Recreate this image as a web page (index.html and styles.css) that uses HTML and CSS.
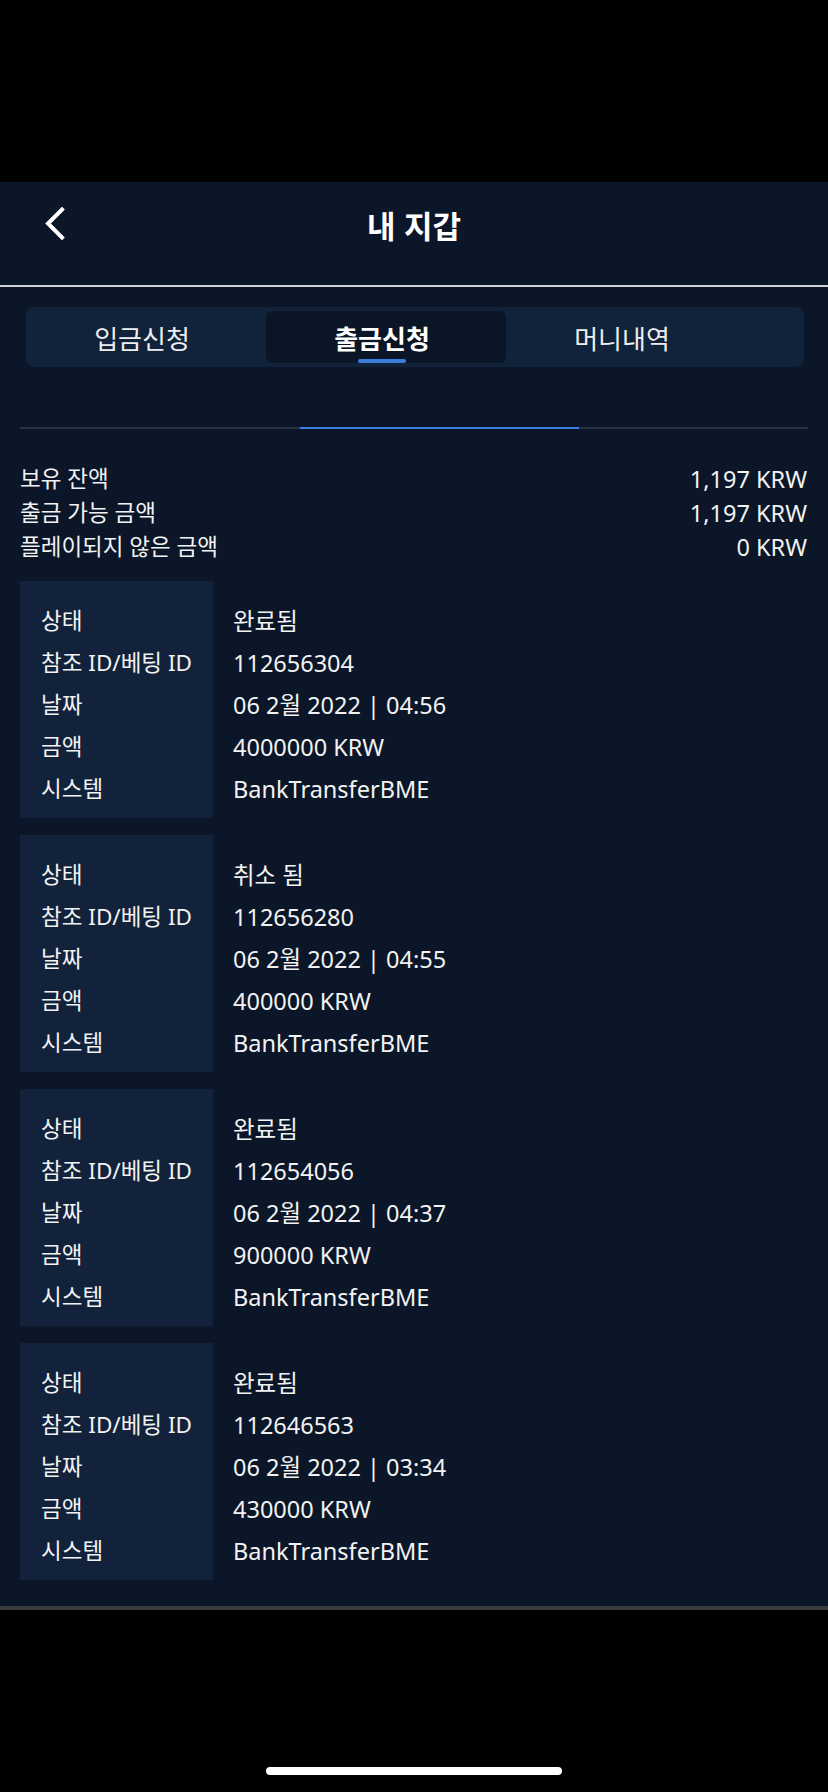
FILE: index.html
```html
<!DOCTYPE html>
<html lang="ko">
<head>
    <meta charset="UTF-8">
    <meta name="viewport" content="width=device-width, initial-scale=1.0">
    <title>내 지갑</title>
    <link rel="stylesheet" href="styles.css">
</head>
<body>
    <div class="status-bar"></div>

    <div class="app">
        <header class="topbar">
            <button class="back" aria-label="뒤로">
                <svg width="20" height="33" viewBox="0 0 20 33">
                    <polyline points="17,2.5 3,16.5 17,30.5" fill="none" stroke="#ffffff" stroke-width="4" stroke-linecap="square" stroke-linejoin="miter"/>
                </svg>
            </button>
            <h1>내 지갑</h1>
            <span></span>
        </header>

        <main class="content">
            <nav class="tabs">
                <div class="tab">입금신청</div>
                <div class="tab active">출금신청</div>
                <div class="tab">머니내역</div>
            </nav>

            <div class="tab-line"><div class="tab-line-active"></div></div>

            <!-- balance summary -->
            <div class="balance">
                <div class="balance-row"><span>보유 잔액</span><span class="amount">1,197 KRW</span></div>
                <div class="balance-row"><span>출금 가능 금액</span><span class="amount">1,197 KRW</span></div>
                <div class="balance-row"><span>플레이되지 않은 금액</span><span class="amount">0 KRW</span></div>
            </div>

            <!-- withdrawal history -->
            <div class="records">
                <div class="record">
                    <div class="labels">
                        <div>상태</div><div>참조 ID/베팅 ID</div><div>날짜</div><div>금액</div><div>시스템</div>
                    </div>
                    <div class="values">
                        <div>완료됨</div><div>112656304</div><div>06 2월 2022 | 04:56</div><div>4000000 KRW</div><div>BankTransferBME</div>
                    </div>
                </div>
                <div class="record">
                    <div class="labels">
                        <div>상태</div><div>참조 ID/베팅 ID</div><div>날짜</div><div>금액</div><div>시스템</div>
                    </div>
                    <div class="values">
                        <div>취소 됨</div><div>112656280</div><div>06 2월 2022 | 04:55</div><div>400000 KRW</div><div>BankTransferBME</div>
                    </div>
                </div>
                <div class="record">
                    <div class="labels">
                        <div>상태</div><div>참조 ID/베팅 ID</div><div>날짜</div><div>금액</div><div>시스템</div>
                    </div>
                    <div class="values">
                        <div>완료됨</div><div>112654056</div><div>06 2월 2022 | 04:37</div><div>900000 KRW</div><div>BankTransferBME</div>
                    </div>
                </div>
                <div class="record">
                    <div class="labels">
                        <div>상태</div><div>참조 ID/베팅 ID</div><div>날짜</div><div>금액</div><div>시스템</div>
                    </div>
                    <div class="values">
                        <div>완료됨</div><div>112646563</div><div>06 2월 2022 | 03:34</div><div>430000 KRW</div><div>BankTransferBME</div>
                    </div>
                </div>
            </div>
        </main>
    </div>

    <div class="home-area"><span class="home-indicator"></span></div>
</body>
</html>
```

FILE: styles.css
```css
* {
    margin: 0;
    padding: 0;
    box-sizing: border-box;
}

body {
    font-family: "Noto Sans", "Noto Sans CJK KR", sans-serif;
    background-color: #000000;
    color: #f2f2f2;
    width: 828px;
}

.status-bar {
    height: 182px;
    background-color: #000000;
}

.app {
    height: 1428px;
    background-color: #0b1628;
    border-bottom: 4px solid #3a3b3d;
}

/* top bar */
.topbar {
    height: 105px;
    display: grid;
    grid-template-columns: 1fr auto 1fr;
    align-items: center;
    padding-bottom: 17px;
    border-bottom: 2px solid #cfd0d2;
}

.back {
    background: none;
    border: none;
    width: 20px;
    height: 33px;
    margin-left: 45px;
    margin-top: -4px;
    display: flex;
    cursor: pointer;
}

.topbar h1 {
    font-size: 31px;
    font-weight: bold;
    line-height: 40px;
    color: #ffffff;
    font-family: "Noto Sans CJK KR", sans-serif;
}

.content {
    padding: 0 20px;
}

/* tabs */
.tabs {
    display: flex;
    height: 60px;
    margin: 20px 4px 0 6px;
    padding: 4px 0;
    background-color: #11223b;
    border-radius: 8px;
}

.tab {
    width: 240px;
    display: flex;
    justify-content: center;
    align-items: center;
    padding-right: 8px;
    font-size: 26px;
    color: #eeeeee;
    font-family: "Noto Sans CJK KR", sans-serif;
    position: relative;
}

.tab.active {
    background-color: #0a1526;
    border-radius: 6px;
    font-weight: bold;
    color: #ffffff;
}

.tab.active::after {
    content: "";
    position: absolute;
    bottom: 0;
    left: 92px;
    width: 48px;
    height: 4px;
    border-radius: 2px;
    background-color: #3d7ddc;
}

.tab-line {
    margin-top: 60px;
    height: 2px;
    background-color: #273245;
}

.tab-line-active {
    margin-left: 280px;
    width: 279px;
    height: 2px;
    background-color: #3d7ddc;
}

/* balance */
.balance {
    margin-top: 33px;
    font-size: 22.5px;
    line-height: 34px;
}

.balance-row {
    display: flex;
    justify-content: space-between;
    padding-right: 1px;
}

.balance-row .amount {
    font-size: 23.5px;
}

/* records */
.records {
    margin-top: 17px;
}

.record {
    display: flex;
    margin-bottom: 17px;
    line-height: 42px;
}

.labels,
.values {
    padding: 19px 0 8px;
}

.labels {
    width: 193px;
    padding-left: 21px;
    font-size: 22.5px;
    background-color: #12223b;
}

.values {
    padding-left: 20px;
    font-size: 23.5px;
}

/* bottom */
.home-area {
    height: 182px;
    display: flex;
    justify-content: center;
    padding-top: 157px;
}

.home-indicator {
    width: 296px;
    height: 8px;
    border-radius: 4px;
    background-color: #ffffff;
    margin-left: -1px;
}
```
